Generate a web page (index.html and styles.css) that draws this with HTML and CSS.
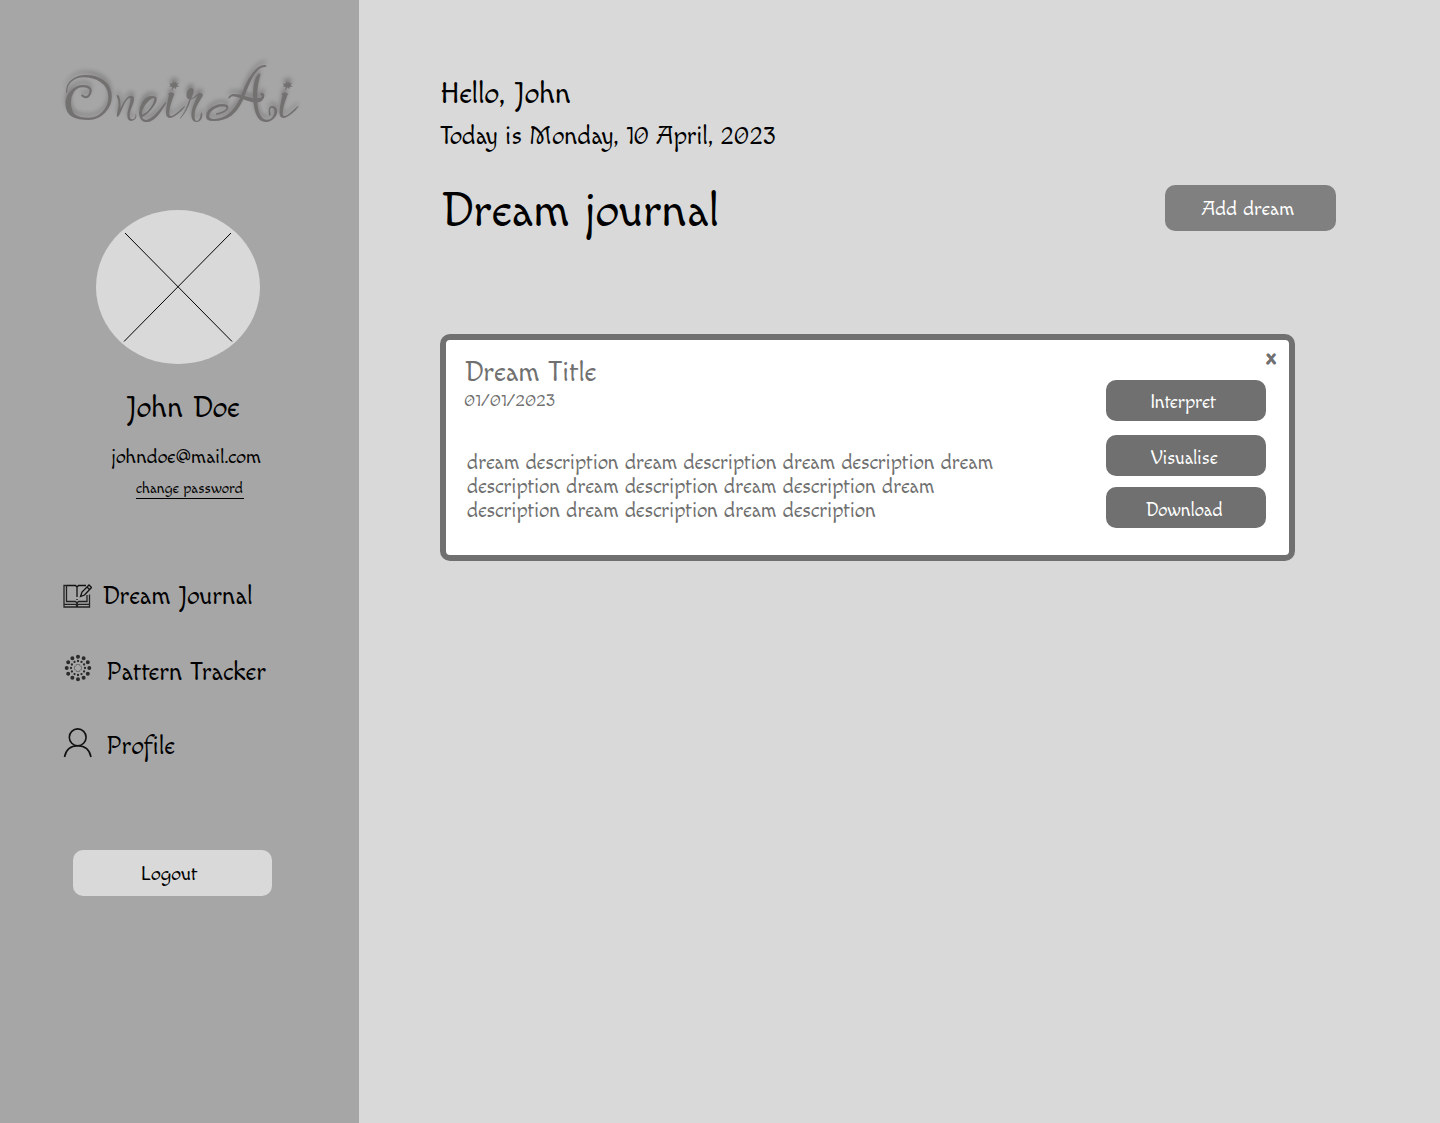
FILE: index.html
```html
<!DOCTYPE html>
<html lang="en">
<head>
<meta charset="utf-8">
<title>OneirAi – Dream journal</title>
<link rel="stylesheet" href="styles.css">
</head>
<body>
<div class="app">
  <aside class="sidebar">
    <div class="logo">OneirAi</div>
    <svg class="avatar" viewBox="0 0 164 154">
      <ellipse cx="82" cy="77" rx="82" ry="77"/>
      <path d="M29 23 136 131.500M135 23 28 131.500"/>
    </svg>
    <div class="name">John Doe</div>
    <div class="email">johndoe@mail.com</div>
    <a class="change">change password</a>
    <nav class="nav">
      <a class="nav-item nav-journal">
        <svg class="icon icon-book" viewBox="0 0 30 30"><path class="pages" d="M4.500 5.500H2V27H27.500V14.500M4.500 5.500V21.500H13.500L15 23L16.500 21.500H25V15M2 24.300h11.500L15 25.500l1.500-1.200H27.500"/><path d="M4.500 5.500H13.500L15 7L16.500 5.500H24M15 7v10M15 19v1M15 23v4"/><path d="M18.500 16.500l1.500-4.500L27 5l2.500 2.500-7 7.500zM25 7l2.500 2.500"/></svg>
        <span>Dream Journal</span></a>
      <a class="nav-item nav-pattern">
        <svg class="icon icon-dots" viewBox="-15 -15 30 30"><circle class="d1" r="11.300" pathLength="120"/><circle class="d2" r="7" pathLength="120"/><circle class="d3" r="3.500" pathLength="120"/></svg>
        <span>Pattern Tracker</span></a>
      <a class="nav-item">
        <svg class="icon icon-user" viewBox="0 0 30 30"><circle cx="14.700" cy="9.300" r="8.400"/><path d="M1.500 29C3 21 8 17.700 14.700 17.700S26.500 21 28 29"/></svg>
        <span>Profile</span></a>
    </nav>
    <button class="logout">Logout</button>
  </aside>
  <main class="main">
    <div class="hello">Hello, John</div>
    <div class="today">Today is Monday, 10 April, 2023</div>
    <header class="heading">
      <h1>Dream journal</h1>
      <button class="add">Add dream</button>
    </header>
    <article class="card">
      <div class="entry">
        <h2>Dream Title</h2>
        <div class="date">01/01/2023</div>
        <p>dream description dream description dream description dream<br>description dream description dream description dream<br>description dream description dream description</p>
      </div>
      <div class="actions">
        <button class="close">x</button>
        <button class="action">Interpret</button>
        <button class="action shifted">Visualise</button>
        <button class="action shifted">Download</button>
      </div>
    </article>
  </main>
</div>
</body>
</html>
```
FILE: styles.css
```css
* { box-sizing: border-box; }
body { margin: 0; font-family: Macondo, Lato, sans-serif; color: #000; background: #d9d9d9; }
h1, h2, p { margin: 0; font-weight: 400; }
button { border: 0; padding: 0; font: inherit; border-radius: 10px; }
.app { display: flex; min-height: 1123px; white-space: nowrap; }
.sidebar { width: 359px; flex: none; background: #a6a6a6; padding-top: 54px; display: flex; flex-direction: column; align-items: flex-start; }
.logo { height: 80px; margin-left: 63px; color: #737070; font: 92.500px/80px Ole, cursive; text-shadow: 0 -4px 4px rgba(0,0,0,.25); }
.avatar { width: 164px; height: 154px; margin: 76px 0 0 96px; fill: #d9d9d9; stroke-width: 1; }
.avatar path { stroke: #000; }
.name { margin: 26px 0 0 126px; font-size: 30px; line-height: 36px; }
.email { margin: 19px 0 0 111px; font-size: 20px; line-height: 24px; }
.change { margin: 10px 0 0 136px; width: 108px; font-size: 15px; line-height: 20px; height: 20px; border-bottom: 1px solid #000; }
.nav { margin: 81px 0 0 62px; display: flex; flex-direction: column; gap: 43px; font-size: 25.400px; line-height: 32px; }
.nav-item { display: flex; gap: 14px; }
.nav-journal { gap: 10px; }
.nav-pattern { padding-top: 1px; margin-bottom: -1px; }
.icon { width: 30px; height: 30px; fill: none; stroke: #111; stroke-width: 1.300; }
.pages { stroke: #222; }
.icon-dots { margin: -3px -1px 0 1px; stroke-linecap: round; stroke: #2b2b2b; }
.d1 { stroke-width: 4; stroke-dasharray: 0 10; }
.d2 { stroke-width: 2.300; stroke-dasharray: 0 10; }
.d3 { stroke-width: 1; stroke-dasharray: 0 10; }
.icon-user { margin: -2px -1px 0 1px; stroke-width: 1.600; }
.logout { margin: 88px 0 0 73px; width: 199px; height: 46px; padding: 2px 6px 0 0; background: #d9d9d9; font-size: 20px; }
.main { flex: 1; padding: 76px 0 0 81px; }
.hello { font-size: 30px; line-height: 36px; }
.today { margin-top: 9px; font-size: 25px; line-height: 32px; }
.heading { margin-top: 26px; width: 896px; display: flex; align-items: center; justify-content: space-between; }
h1 { font-size: 48px; line-height: 50px; padding-top: 8px; }
.add { width: 171px; height: 46px; padding: 1px 5px 0 0; background: #808080; color: #fff; font-size: 20px; }
.card { margin-top: 97px; width: 855px; height: 227px; border: 6px solid #707070; border-radius: 10px; background: #fff; color: #707070; display: flex; justify-content: space-between; padding: 4px 13px 0 18px; }
.entry { padding-top: 13px; }
h2 { font-size: 28px; line-height: 32px; }
.date { margin-top: 2px; font-size: 18px; line-height: 20px; }
.card p { margin-top: 40px; padding-left: 3px; font-size: 20.550px; line-height: 24px; }
.actions { display: flex; flex-direction: column; width: 170px; }
.close { align-self: flex-end; background: none; color: #707070; font-weight: 900; font-size: 21px; line-height: 24px; margin-bottom: 10px; padding-top: 2px; -webkit-text-stroke: .4px #707070; }
.action { width: 160px; height: 41px; padding: 3px 5px 0 0; background: #707070; color: #fff; font-size: 18.800px; margin-bottom: 11px; flex: none; }
.shifted { padding: 4px 4px 0 0; }
.close + .action { margin-bottom: 14.400px; }
```
